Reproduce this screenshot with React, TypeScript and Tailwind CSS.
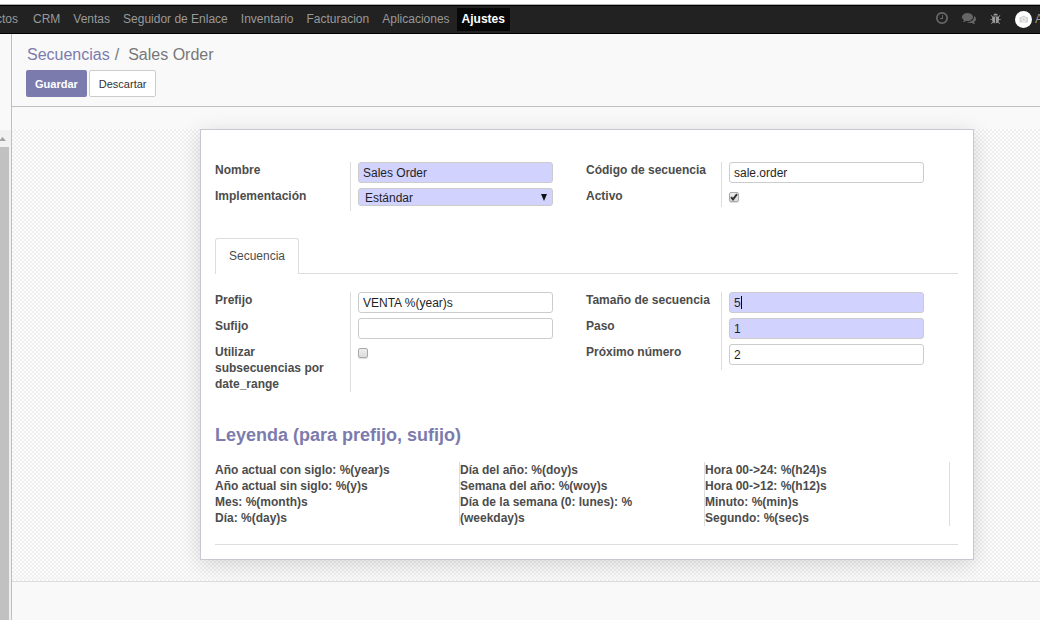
import type { ReactNode } from "react";

const navItems = ["CRM", "Ventas", "Seguidor de Enlace", "Inventario", "Facturacion", "Aplicaciones"];

const legend = [
  ["Año actual con siglo: %(year)s", "Año actual sin siglo: %(y)s", "Mes: %(month)s", "Día: %(day)s"],
  ["Día del año: %(doy)s", "Semana del año: %(woy)s", "Día de la semana (0: lunes): %\u200b(weekday)s"],
  ["Hora 00->24: %(h24)s", "Hora 00->12: %(h12)s", "Minuto: %(min)s", "Segundo: %(sec)s"],
];

const iconPaths = {
  clock:
    "M896 544v448q0 14-9 23t-23 9h-320q-14 0-23-9t-9-23v-64q0-14 9-23t23-9h224v-352q0-14 9-23t23-9h64q14 0 23 9t9 23zm416 352q0-148-73-273t-198-198-273-73-273 73-198 198-73 273 73 273 198 198 273 73 273-73 198-198 73-273zm224 0q0 209-103 385.5t-279.5 279.5-385.5 103-385.5-103-279.5-279.5-103-385.5 103-385.5 279.5-279.5 385.5-103 385.5 103 279.5 279.5 103 385.5z",
  comments:
    "M1408 768q0 139-94 257t-256.5 186.5-353.5 68.5q-86 0-176-16-124 88-278 128-36 9-86 16h-3q-11 0-20.5-8t-11.5-21q-1-3-1-6.5t.5-6.5 2-6l2.5-5 3.5-5.5 4-5 4.5-5 4-4.5q5-6 23-25t26-29.5 22.5-29 25-38.5 20.5-44q-124-72-195-177t-71-224q0-139 94-257t256.5-186.5 353.5-68.5 353.5 68.5 256.5 186.5 94 257zm384 256q0 120-71 224.5t-195 176.5q10 24 20.5 44t25 38.5 22.5 29 26 29.5 23 25q1 1 4 4.5t4.5 5 4 5 3.5 5.5l2.5 5 2 6 .5 6.5-1 6.5q-3 14-13 22t-22 7q-50-7-86-16-154-40-278-128-90 16-176 16-271 0-472-132 58 4 88 4 161 0 309-45t264-129q125-92 192-212t67-254q0-77-23-152 129 71 204 178t75 230z",
  bug: "M1632 960q0 26-19 45t-45 19h-224q0 171-67 290l208 209q19 19 19 45t-19 45q-18 19-45 19t-45-19l-198-197q-5 5-15 13t-42 28.5-65 36.5-82 29-97 13v-896h-128v896q-51 0-101.5-13.5t-87-33-66-39-43.5-32.5l-15-14-183 207q-20 21-48 21-24 0-43-16-19-18-20.5-44.5t15.5-46.5l202-227q-58-114-58-274h-224q-26 0-45-19t-19-45 19-45 45-19h224v-294l-173-173q-19-19-19-45t19-45 45-19 45 19l173 173h844l173-173q19-19 45-19t45 19 19 45-19 45l-173 173v294h224q26 0 45 19t19 45zm-480-576h-640q0-133 93.5-226.5t226.5-93.5 226.5 93.5 93.5 226.5z",
};

function Row({ id, label, children }: { id: string; label: string; children: ReactNode }) {
  return (
    <div className="flex">
      <label htmlFor={id} className="w-[135px] shrink-0 pr-2 font-bold">
        {label}
      </label>
      <div className="min-w-0 flex-1 border-l border-[#ddd] pl-[7px]">{children}</div>
    </div>
  );
}

function TextField({ id, value, required }: { id: string; value: string; required?: boolean }) {
  return (
    <input
      id={id}
      type="text"
      defaultValue={value}
      className={`mb-[5px] block h-[21px] w-full rounded-[3px] border border-[#ccc] px-1 text-xs text-[#1f1f1f] outline-none ${
        required ? "bg-[#d2d2ff]" : "bg-white"
      }`}
    />
  );
}

function CheckField({ id, checked }: { id: string; checked?: boolean }) {
  return (
    <div className="pt-1">
      <span className="relative flex w-[10px]">
        <input
          id={id}
          type="checkbox"
          defaultChecked={checked}
          className="peer size-[10px] appearance-none rounded-[2px] border border-[#a9a9a9] bg-linear-to-b from-[#ededed] to-[#dcdcdc] shadow-[0_1px_1px_#ddd]"
        />
        <svg
          viewBox="0 0 10 10"
          className="pointer-events-none absolute inset-0 hidden size-[10px] peer-checked:block"
          fill="none"
          stroke="#333"
          strokeWidth="2"
        >
          <path d="M2 5.2 4 7.4 8 2.2" />
        </svg>
      </span>
    </div>
  );
}

export default function App() {
  return (
    <div className="flex min-h-screen flex-col overflow-hidden bg-[#f9f9f9] font-['Liberation_Sans',Arial,sans-serif] text-xs leading-4 text-[#4c4c4c]">
      <header className="border-t-4 border-white">
        <div className="flex h-[30px] items-center justify-between border-t border-b border-t-[#b0b0b0] border-b-black bg-[#222] text-[#999] shadow-[inset_0_1px_0_#000]">
          <nav className="flex h-[23px] shrink-0 items-center gap-px whitespace-nowrap">
            <a href="#ctos" className="-ml-1 pr-2">
              ctos
            </a>
            {navItems.map((item) => (
              <a key={item} href="#menu" className="px-[6px]">
                {item}
              </a>
            ))}
            <a href="#ajustes" className="flex h-full items-center bg-[#080808] px-[5px] font-bold text-white">
              Ajustes
            </a>
          </nav>
          <div className="-mr-[3px] flex items-center">
            <button type="button" aria-label="Actividades" className="mr-[14px] mb-[2px] text-[#666]">
              <svg viewBox="0 0 1536 1792" className="h-[14px] w-3" fill="currentColor">
                <path d={iconPaths.clock} />
              </svg>
            </button>
            <button type="button" aria-label="Mensajes" className="mr-[14px] mb-[2px] text-[#666]">
              <svg viewBox="0 0 1792 1792" className="size-[14px]" fill="currentColor">
                <path d={iconPaths.comments} />
              </svg>
            </button>
            <button type="button" aria-label="Depurar" className="mr-[13px] text-[#999]">
              <svg viewBox="0 0 1792 1792" className="size-3" fill="currentColor">
                <path d={iconPaths.bug} />
              </svg>
            </button>
            <a href="#usuario" className="flex items-center gap-[3px]">
              <svg viewBox="0 0 17 17" className="size-[17px]">
                <circle cx="8.5" cy="8.5" r="8.5" fill="#fff" />
                <path d="M4.5 6h2l1-1.2h2.4l1 1.2h2v5.5h-8.4z" fill="#d4d4d4" />
                <circle cx="8.7" cy="8.6" r="1.9" fill="#d4d4d4" stroke="#fff" strokeWidth=".8" />
              </svg>
              A
            </a>
          </div>
        </div>
      </header>

      <div className="flex flex-1">
        <aside className="flex w-3 shrink-0 flex-col border-r border-[#bfbfc2] pt-24">
          <div className="flex flex-1 flex-col bg-[#f1f1f1]">
            <svg viewBox="0 0 9 17" className="h-[17px] w-[9px]">
              <path d="M-1 11 2.5 7 6 11z" fill="#a3a3a3" />
            </svg>
            <div className="mr-[2px] flex-1 bg-[#c1c1c1]" />
          </div>
        </aside>

        <div className="flex min-w-0 flex-1 flex-col">
          <div className="border-b border-[#bfbfc2] px-[14px] pt-[11px] pb-[9px]">
            <h1 className="mb-[5px] flex gap-[5px] pl-px text-base leading-5 text-[#777]">
              <a href="#secuencias" className="text-[#7c7bad]">
                Secuencias
              </a>
              <span className="mr-1">/</span>
              Sales Order
            </h1>
            <div className="flex gap-[2px] text-[11px]">
              <button type="button" className="h-[27px] rounded-[2px] bg-[#7c7bad] px-[9px] font-bold text-white">
                Guardar
              </button>
              <button type="button" className="h-[27px] rounded-[2px] border border-[#ccc] bg-white px-[9px] text-[#333]">
                Descartar
              </button>
            </div>
          </div>

          <main className="mt-[22px] border-b border-[#ddd] bg-[conic-gradient(#f0f0f0_25%,#fcfcfc_0_50%,#f0f0f0_0_75%,#fcfcfc_0)] bg-size-[4px_4px] pr-[66px] pb-[21px] pl-[188px]">
            <form className="border border-[#c8c8d3] bg-white pt-8 pr-[15px] pb-[14px] pl-[14px] shadow-[0_4px_20px_rgba(0,0,0,0.15)]">
              <div className="grid grid-cols-2 pr-px">
                <div className="pr-[33px]">
                  <Row id="nombre" label="Nombre">
                    <TextField id="nombre" value="Sales Order" required />
                  </Row>
                  <Row id="implementacion" label="Implementación">
                    <div className="relative mb-[5px]">
                      <select
                        id="implementacion"
                        className="block h-[18px] w-full appearance-none rounded-[3px] border border-[#ccc] bg-[#d2d2ff] px-[6px] pt-px text-xs leading-4 text-[#1f1f1f] outline-none"
                      >
                        <option>Estándar</option>
                      </select>
                      <svg viewBox="0 0 6 7" className="pointer-events-none absolute top-[6px] right-[6px] h-[7px] w-[6px]">
                        <path d="M0 0h6L3 7z" fill="#111" />
                      </svg>
                    </div>
                  </Row>
                </div>
                <div className="pr-[33px]">
                  <Row id="codigo" label="Código de secuencia">
                    <TextField id="codigo" value="sale.order" />
                  </Row>
                  <Row id="activo" label="Activo">
                    <div className="h-[19px]">
                      <CheckField id="activo" checked />
                    </div>
                  </Row>
                </div>
              </div>

              <div className="mt-[27px] flex border-b border-[#ddd]" role="tablist">
                <button
                  type="button"
                  role="tab"
                  aria-selected="true"
                  className="-mb-px h-9 rounded-t-[3px] border border-b-0 border-[#ddd] bg-white px-[13px] pb-[2px]"
                >
                  Secuencia
                </button>
              </div>

              <div className="mt-[18px] grid grid-cols-2 pr-px">
                <div className="pr-[33px]">
                  <Row id="prefijo" label="Prefijo">
                    <TextField id="prefijo" value="VENTA %(year)s" />
                  </Row>
                  <Row id="sufijo" label="Sufijo">
                    <TextField id="sufijo" value="" />
                  </Row>
                  <Row id="subsecuencias" label="Utilizar subsecuencias por date_range">
                    <CheckField id="subsecuencias" />
                  </Row>
                </div>
                <div className="pr-[33px]">
                  <Row id="tamano" label="Tamaño de secuencia">
                    <div className="relative">
                      <TextField id="tamano" value="5" required />
                      <span className="absolute top-1 left-3 h-[13px] w-px bg-black" />
                    </div>
                  </Row>
                  <Row id="paso" label="Paso">
                    <TextField id="paso" value="1" required />
                  </Row>
                  <Row id="proximo" label="Próximo número">
                    <TextField id="proximo" value="2" />
                  </Row>
                </div>
              </div>

              <h2 className="mt-8 mb-4 text-lg leading-[22px] font-bold text-[#7c7bad]">Leyenda (para prefijo, sufijo)</h2>
              <div className="mr-2 grid grid-cols-3 font-bold">
                {legend.map((lines) => (
                  <div key={lines[0]} className="border-r border-[#ddd]">
                    {lines.map((line) => (
                      <p key={line} className="pr-8">
                        {line}
                      </p>
                    ))}
                  </div>
                ))}
              </div>
              <hr className="mt-[18px] border-[#ddd]" />
            </form>
          </main>
        </div>
      </div>
    </div>
  );
}
